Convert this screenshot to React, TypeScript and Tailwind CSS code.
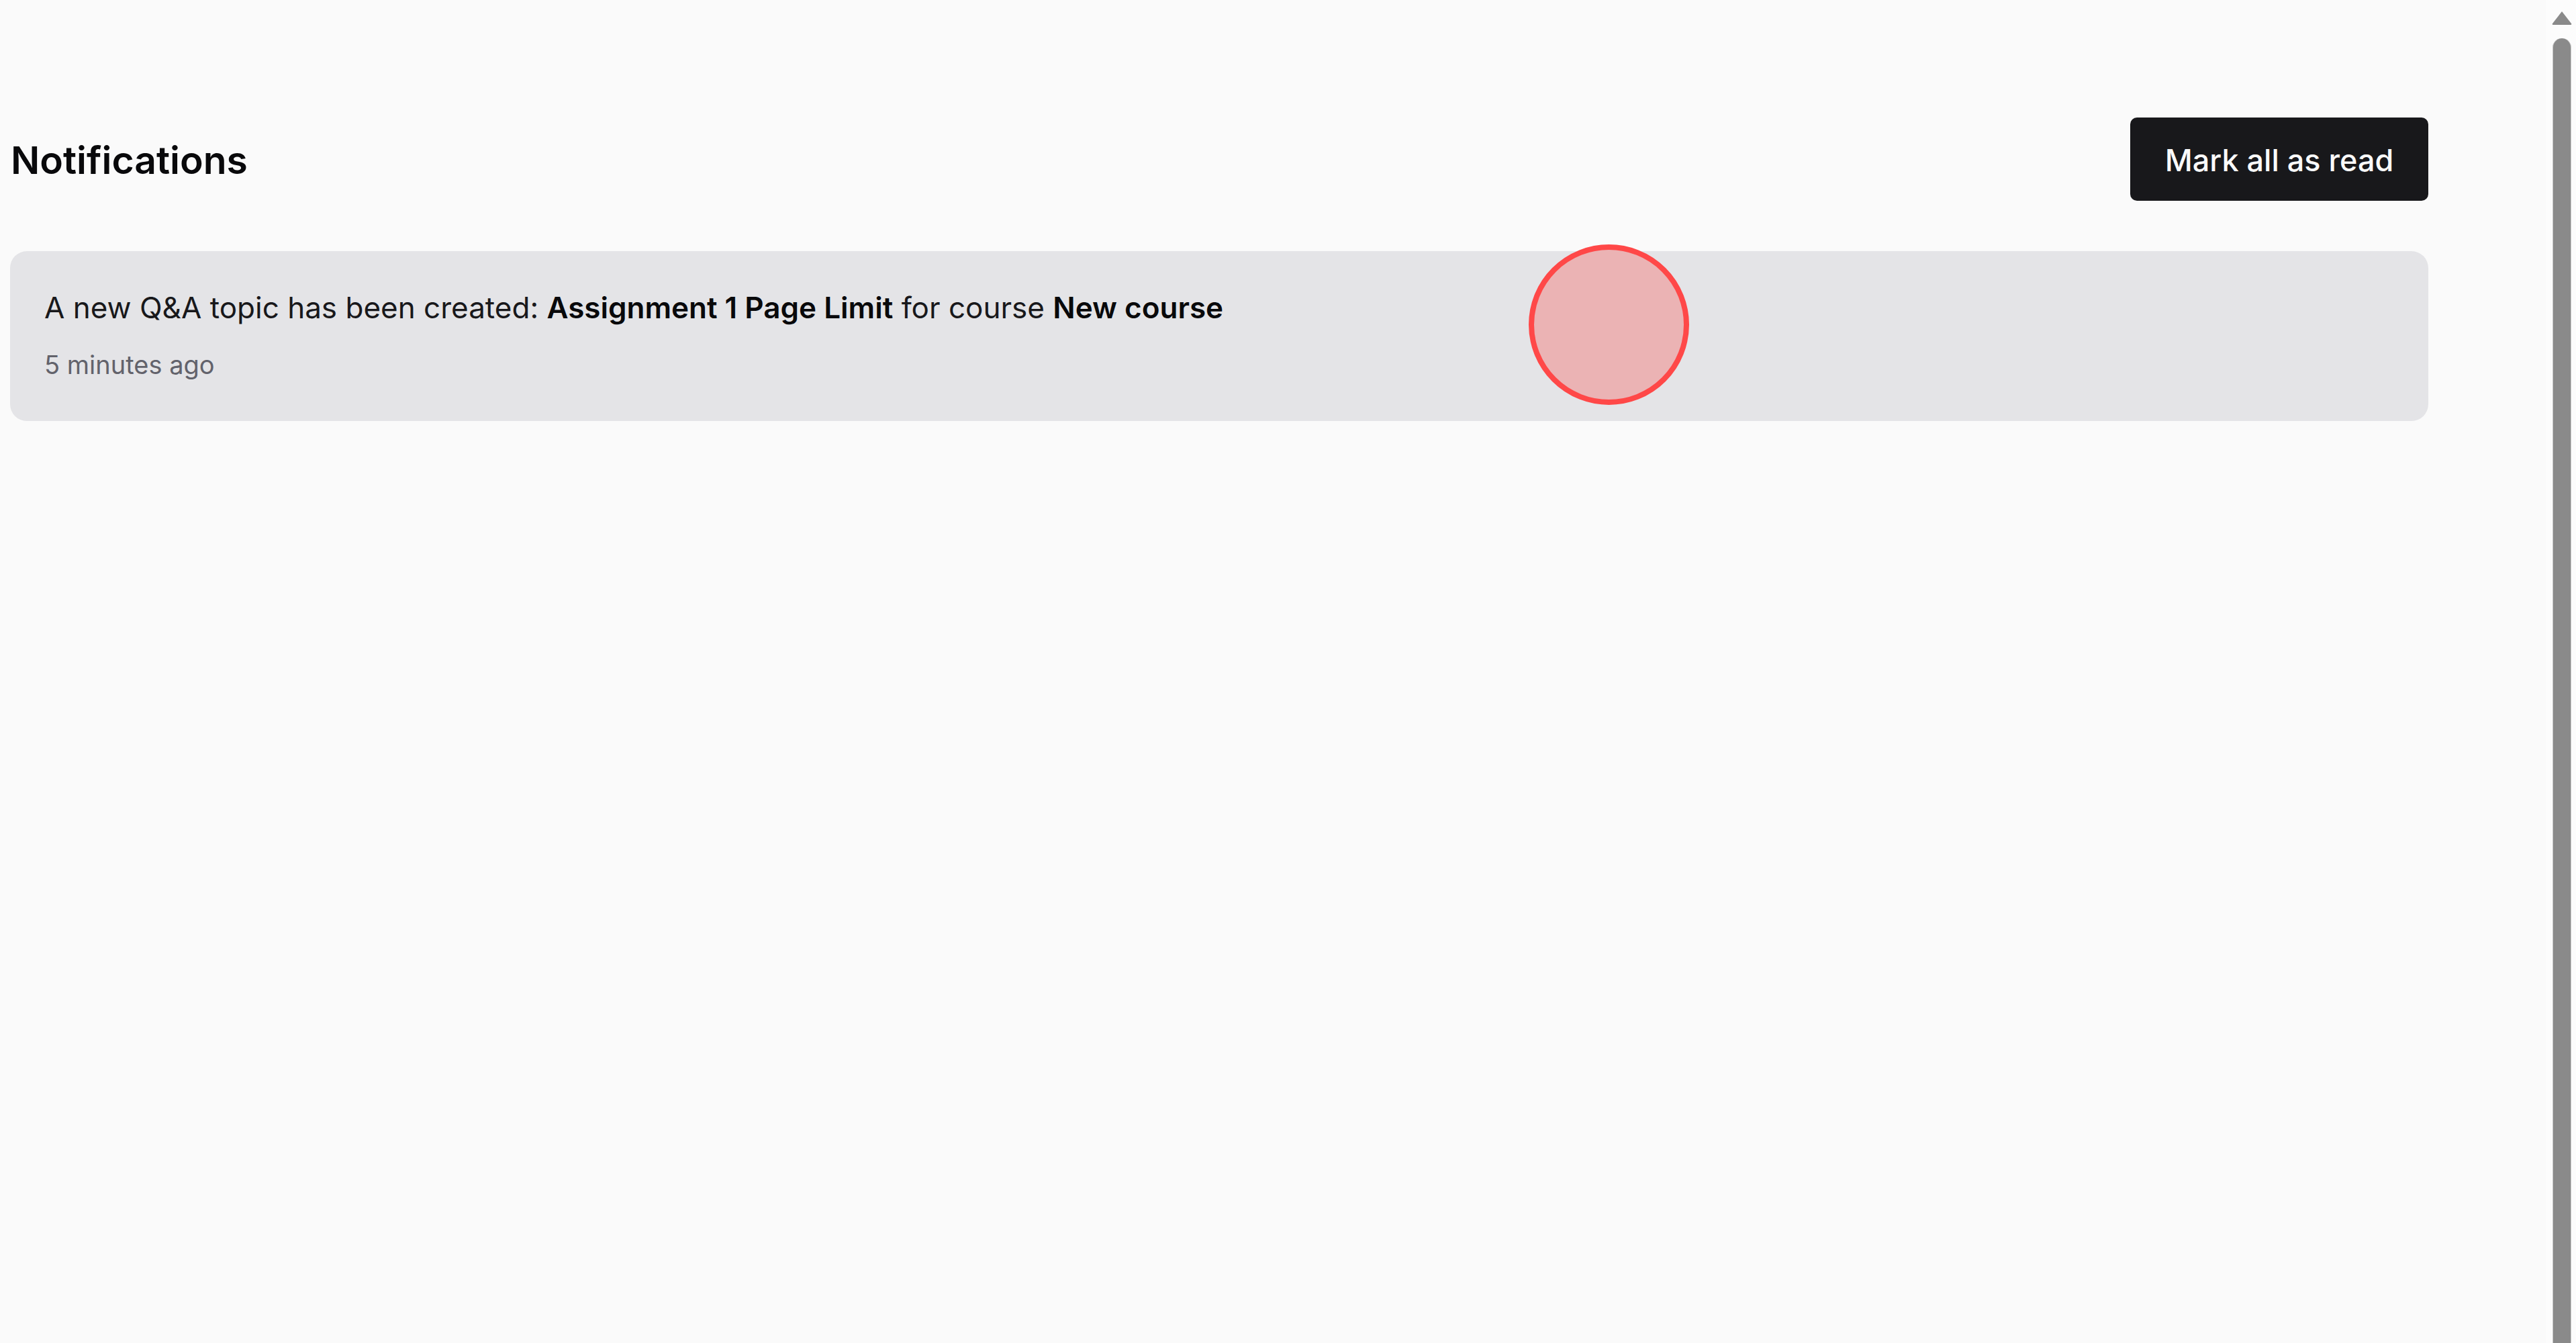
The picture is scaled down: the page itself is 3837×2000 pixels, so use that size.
export default function App() {
  return (
    <div
      className="relative flex h-[2000px] w-full overflow-hidden bg-[#fafafa] text-[#18181b]"
      style={{ fontFamily: 'Inter, "Noto Sans", sans-serif' }}
    >
      <main className="flex-1 pl-[15px] pt-[175px]">
        <div className="flex w-[3602px] flex-col">
          <div className="flex h-[124px] items-center justify-between">
            <h1 className="ml-[1px] mt-[3px] text-[57px] font-semibold leading-none text-[#09090b]">
              Notifications
            </h1>
            <button
              type="button"
              className="flex h-[124px] w-[444px] items-center justify-center rounded-[10px] bg-[#18181b] pt-[4px] text-[45px] font-medium text-[#fafafa]"
            >
              Mark all as read
            </button>
          </div>

          <div className="mt-[75px] flex h-[253px] flex-col rounded-[25px] bg-[#e4e4e7] pl-[51px] pt-[51px]">
            <p className="text-[44px] leading-[66px] text-[#18181b]">
              A new Q&amp;A topic has been created: <span className="font-semibold text-[#09090b]">Assignment 1 Page Limit</span> for course{' '}
              <span className="font-semibold text-[#09090b]">New course</span>
            </p>
            <p className="mt-[25px] text-[38px] leading-[55px] text-[#62626b]">5 minutes ago</p>
          </div>
        </div>
      </main>

      {/* page scrollbar */}
      <div className="flex w-[45px] flex-col items-center bg-[#fcfcfc] pl-[3px] pt-[15px]">
        <svg width="32" height="23" viewBox="0 0 32 23" className="shrink-0">
          <path d="M16 2 L30 20 Q31 22 29 22 L3 22 Q1 22 2 20 Z" fill="#8a8a8a" />
        </svg>
        <div className="mt-[19px] w-[28px] flex-1 rounded-t-full border-x border-[#c8c8c8] bg-[#8a8a8a]" />
      </div>

      {/* click marker */}
      <div className="absolute left-[2277px] top-[364px] h-[239px] w-[239px] rounded-full border-[8px] border-[#ff4848] bg-[#ebb3b4]" />
    </div>
  )
}
